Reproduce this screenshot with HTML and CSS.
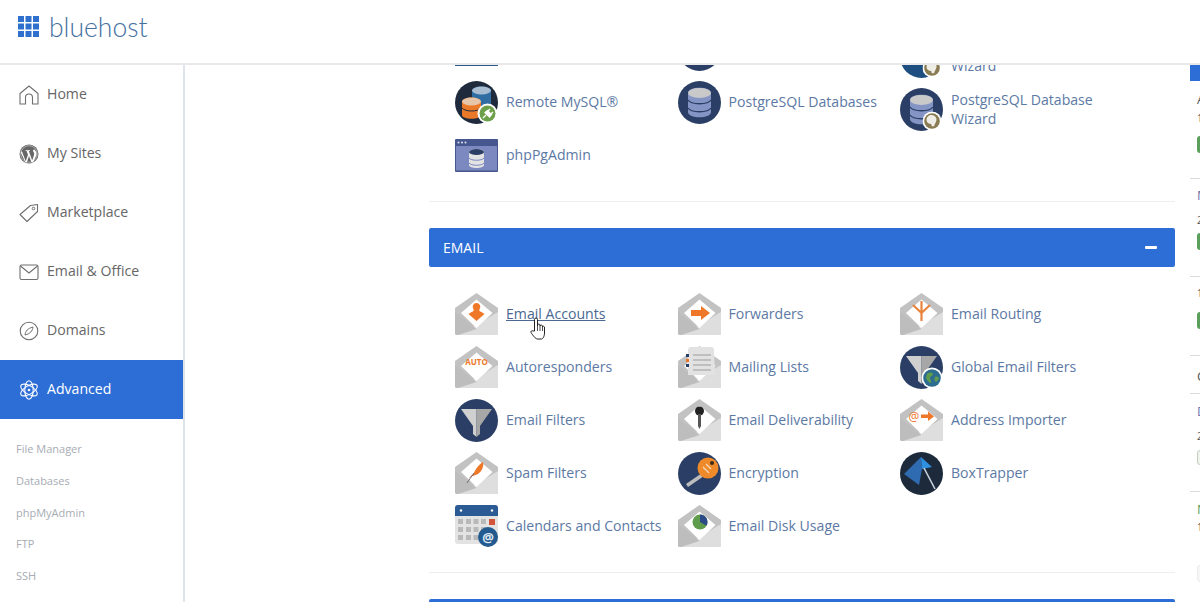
FILE: index.html
```html
<!DOCTYPE html>
<html lang="en">
<head>
<meta charset="utf-8">
<title>Bluehost - Advanced</title>
<link rel="stylesheet" href="styles.css">
</head>
<body>
<svg class="defs" width="0" height="0" aria-hidden="true">
  <symbol id="env" viewBox="0 0 43 43">
    <path d="M21.5 0 43 15V40a2 2 0 0 1-2 2H2a2 2 0 0 1-2-2V15Z" fill="#c2c2c2"/>
    <path d="M43 19V40a2 2 0 0 1-2 2H3L21.5 32Z" fill="#dedede"/>
    <path d="M0 19 21.5 36 3 42H2a2 2 0 0 1-2-2Z" fill="#bdbdbd"/>
    <path d="M21.5 6.500 37.500 20 21.500 35 6 20Z" fill="#fff"/>
  </symbol>
  <symbol id="pgdb" viewBox="0 0 43 43">
    <circle cx="21.500" cy="21.500" r="21.500" fill="#2b3f66"/>
    <path d="M10 12c0-7 23-7 23 0V31c0 7-23 7-23 0Z" fill="#8494c4"/>
    <ellipse cx="21.500" cy="12" rx="11.500" ry="5" fill="#c9c9c9"/>
    <path d="M10 19c3 5 20 5 23 0M10 27c3 5 20 5 23 0" fill="none" stroke="#2b3f66" stroke-width="1.300"/>
  </symbol>
  <symbol id="eleph" viewBox="0 0 18 18">
    <circle cx="9" cy="9" r="9" fill="#fff"/>
    <circle cx="9" cy="9" r="7.400" fill="#8a7c52"/>
    <path d="M3.800 8c0-3.500 3.200-5 5.700-4.500 3.500.5 4.500 3.800 3.300 6.300-.6 1.200-1.300 2.400-1.800 4.200H8.700L8.300 11.800C6 11.700 3.800 10.300 3.800 8Z" fill="#efeee6"/>
  </symbol>
  <symbol id="funnel" viewBox="0 0 43 43">
    <circle cx="21.500" cy="21.500" r="21.500" fill="#2b3f66"/>
    <path d="M6 10H21.500V38L18 35V27Z" fill="#d0d0d0"/>
    <path d="M37 10H21.500V38L25 35V27Z" fill="#a7a7a7"/>
  </symbol>
</svg>

<header class="topbar">
  <svg class="logo-grid" viewBox="0 0 21 21" width="21" height="21" aria-hidden="true">
    <g fill="#2f6fce">
      <rect width="6" height="6"/><rect x="7.500" width="6" height="6"/><rect x="15" width="6" height="6"/>
      <rect y="7.500" width="6" height="6"/><rect x="7.500" y="7.500" width="6" height="6"/><rect x="15" y="7.500" width="6" height="6"/>
      <rect y="15" width="6" height="6"/><rect x="7.500" y="15" width="6" height="6"/><rect x="15" y="15" width="6" height="6"/>
    </g>
  </svg>
  <span class="logo-text">bluehost</span>
</header>

<div class="body">
  <nav class="sidebar">
    <a class="nav-item">
      <svg class="nav-icon" viewBox="0 0 20 20"><path d="M1 19V8.500L10 1l9 7.500V19h-5.500V12.500a3.500 3.500 0 0 0-7 0V19Z" fill="none" stroke="#6f6f6f" stroke-width="1.100" stroke-linejoin="round"/></svg>
      <span>Home</span>
    </a>
    <a class="nav-item">
      <svg class="nav-icon" viewBox="0 0 20 20"><circle cx="10" cy="10" r="9.500" fill="#666"/><circle cx="10" cy="10" r="8.300" fill="none" stroke="#ddd" stroke-width=".6"/><path d="M2.800 7 6.700 17.300 9 10.700 7.600 7H6.500V6.200H11V7H9.800L13.200 16.500 15 11c.6-2-.5-3-1-4 0-1 .6-1.500 1.300-1.500L17.300 8 17.500 11 14 18.500H12.600L10 12 7.800 18.500H6.500L1.800 8.500Z" fill="#fff"/></svg>
      <span>My Sites</span>
    </a>
    <a class="nav-item">
      <svg class="nav-icon" viewBox="0 0 20 20"><path d="M1 11.500 11.500 2.500 18.500 1.500 18.500 8.500 8 18.500Z" fill="none" stroke="#6f6f6f" stroke-width="1.100" stroke-linejoin="round"/><circle cx="14.500" cy="5.500" r="1.300" fill="none" stroke="#6f6f6f"/></svg>
      <span>Marketplace</span>
    </a>
    <a class="nav-item">
      <svg class="nav-icon" viewBox="0 0 20 20"><rect x="1" y="3" width="18" height="14.500" rx="1.500" fill="none" stroke="#6f6f6f" stroke-width="1.100"/><path d="M1.500 4 10 11l8.500-7" fill="none" stroke="#6f6f6f" stroke-width="1.100"/></svg>
      <span>Email &amp; Office</span>
    </a>
    <a class="nav-item">
      <svg class="nav-icon" viewBox="0 0 20 20"><circle cx="10" cy="10" r="8.800" fill="none" stroke="#6f6f6f" stroke-width="1.100"/><path d="M14 6c-.5 4-2.500 6.500-8 8 .5-4 2.500-6.500 8-8Z" fill="none" stroke="#6f6f6f" stroke-width="1"/></svg>
      <span>Domains</span>
    </a>
    <a class="nav-item is-active">
      <svg class="nav-icon" viewBox="0 0 20 20"><g fill="none" stroke="#fff" stroke-width="1.100"><ellipse cx="10" cy="10" rx="4.200" ry="9.300"/><ellipse cx="10" cy="10" rx="4.200" ry="9.300" transform="rotate(60 10 10)"/><ellipse cx="10" cy="10" rx="4.200" ry="9.300" transform="rotate(120 10 10)"/></g><circle cx="10" cy="10" r="1.300" fill="#fff"/></svg>
      <span>Advanced</span>
    </a>
    <ul class="sub-nav">
      <li>File Manager</li>
      <li>Databases</li>
      <li>phpMyAdmin</li>
      <li>FTP</li>
      <li>SSH</li>
    </ul>
  </nav>

  <main class="main">
    <div class="scroller">
      <section class="group">
        <div class="tools">
          <a class="tool">
            <svg class="ico ico-win" viewBox="0 0 43 33"><rect width="43" height="33" fill="#2a5a8f"/><rect x="1" y="7" width="41" height="24.500" fill="#7c88c0"/></svg>
            <span>phpMyAdmin</span>
          </a>
          <a class="tool">
            <svg class="ico" viewBox="0 0 43 43"><use href="#pgdb"/></svg>
            <span>MySQL Databases</span>
          </a>
          <a class="tool tool-low">
            <svg class="ico" viewBox="0 0 43 43"><circle cx="21.500" cy="21.500" r="21.500" fill="#1e4f80"/><use href="#eleph" x="22.500" y="23.500" width="19" height="19"/></svg>
            <span>MySQL Database<br>Wizard</span>
          </a>
          <a class="tool">
            <svg class="ico" viewBox="0 0 43 43">
              <circle cx="21.500" cy="21.500" r="21.500" fill="#1f2a3d"/>
              <path d="M17 10c0-6 19-6 19 0V24c0 5-19 5-19 0Z" fill="#2f6da3"/>
              <ellipse cx="26.500" cy="9.500" rx="9.500" ry="4" fill="#a9bdd2"/>
              <path d="M7 21c0-6 19-6 19 0V34c0 5-19 5-19 0Z" fill="#ea7a2a"/>
              <ellipse cx="16.500" cy="20.500" rx="9.500" ry="4" fill="#e6c5a8"/>
              <path d="M7 27c3 4 16 4 19 0" fill="none" stroke="#1f2a3d"/>
              <circle cx="32.500" cy="32.500" r="10" fill="#fff"/>
              <circle cx="32.500" cy="32.500" r="8" fill="#6da04b"/>
              <path d="M28 37l3-3M30 31.500l4.500 4.500 2-2.500-4-4ZM33 30l2-2M36 33l2-2" stroke="#fff" stroke-width="1.300" fill="#fff"/>
            </svg>
            <span>Remote MySQL®</span>
          </a>
          <a class="tool">
            <svg class="ico" viewBox="0 0 43 43"><use href="#pgdb"/></svg>
            <span>PostgreSQL Databases</span>
          </a>
          <a class="tool tool-low">
            <svg class="ico" viewBox="0 0 43 43"><use href="#pgdb"/><use href="#eleph" x="22.500" y="23.500" width="19" height="19"/></svg>
            <span>PostgreSQL Database<br>Wizard</span>
          </a>
          <a class="tool">
            <svg class="ico ico-win" viewBox="0 0 43 33">
              <rect width="43" height="33" rx="1" fill="#46568f"/><rect x="1" y="7" width="41" height="24.500" fill="#7c88c0"/>
              <g fill="#dfe3f0"><circle cx="3.500" cy="3.500" r="1"/><circle cx="7" cy="3.500" r="1"/><circle cx="10.500" cy="3.500" r="1"/></g>
              <path d="M14 13c0-4 15-4 15 0V26c0 4-15 4-15 0Z" fill="#e3e3e3"/>
              <ellipse cx="21.500" cy="13" rx="7.500" ry="3" fill="#2b3f66"/>
              <path d="M14 19c2 3 13 3 15 0M14 24c2 3 13 3 15 0" fill="none" stroke="#7c88c0"/>
            </svg>
            <span>phpPgAdmin</span>
          </a>
        </div>
      </section>

      <section class="group">
        <h2 class="panel-head">EMAIL <span class="minus"></span></h2>
        <div class="tools tools-email">
          <a class="tool is-hover">
            <svg class="ico" viewBox="0 0 43 43"><use href="#env"/><path d="M21.500 10a4 4 0 0 1 3 6.500c-.7 1 0 2 2 2.500l3 2-8 7-8-7 3-2c2-.5 2.700-1.500 2-2.500a4 4 0 0 1 3-6.500Z" fill="#ee7728"/></svg>
            <span>Email Accounts</span>
            <svg class="cursor" viewBox="0 0 16 23" width="16" height="23" aria-hidden="true"><path d="M4.500 14V2.500a1.500 1.500 0 0 1 3 0V9.500V8a1.300 1.300 0 0 1 2.500 0v1.500-.5a1.300 1.300 0 0 1 2.500 0v1a1.200 1.200 0 0 1 2 0V16c0 3-1.500 6-3 6H7.500C5.500 22 3 18.500 1 15.500c-.5-1 .8-2.500 2-1.500Z" fill="#fff" stroke="#222" stroke-width="1" stroke-linejoin="round"/><path d="M7.500 10v4M10 10v4M12.500 10v4" stroke="#222" stroke-width=".8"/></svg>
          </a>
          <a class="tool">
            <svg class="ico" viewBox="0 0 43 43"><use href="#env"/><path d="M13 17H23V13L32 20 23 27V23H13Z" fill="#ee7728"/></svg>
            <span>Forwarders</span>
          </a>
          <a class="tool">
            <svg class="ico" viewBox="0 0 43 43"><use href="#env"/><path d="M21.500 28V8M21.500 20 13 12M21.500 20 30 12" fill="none" stroke="#e8843c" stroke-width="2.200"/></svg>
            <span>Email Routing</span>
          </a>
          <a class="tool">
            <svg class="ico" viewBox="0 0 43 43"><use href="#env"/><text class="auto" x="21.500" y="19" text-anchor="middle">AUTO</text></svg>
            <span>Autoresponders</span>
          </a>
          <a class="tool">
            <svg class="ico" viewBox="0 0 43 43"><use href="#env"/><path d="M10 3a3 3 0 0 1 3-2h20a3 3 0 0 1 3 2l1 26H10Z" fill="#e2e2e2"/><path d="M15 9H33M15 14H33M15 19H33M15 24H33" stroke="#b4b4b4" stroke-width="1.300"/><rect x="8" y="8" width="3" height="3" fill="#2b3f66"/><rect x="8" y="13" width="3" height="3" fill="#ee7728"/><rect x="8" y="18" width="3" height="3" fill="#2b3f66"/></svg>
            <span>Mailing Lists</span>
          </a>
          <a class="tool">
            <svg class="ico" viewBox="0 0 43 43"><use href="#funnel"/><circle cx="32" cy="32" r="10.500" fill="#fff"/><circle cx="32" cy="32" r="8.800" fill="#2d6d8f"/><path d="M27 28c2-2 5-2 6 0 0 2-3 2-3 4s2 3 1 5c-2 0-4-3-5-5ZM35 31c2-1 4 0 4 2l-3 3c-2-1-2-3-1-5Z" fill="#5f9c4c"/></svg>
            <span>Global Email Filters</span>
          </a>
          <a class="tool">
            <svg class="ico" viewBox="0 0 43 43"><use href="#funnel"/></svg>
            <span>Email Filters</span>
          </a>
          <a class="tool">
            <svg class="ico" viewBox="0 0 43 43"><use href="#env"/><circle cx="21.500" cy="12" r="4.500" fill="#222"/><path d="M20 15h3v12l-1.500 3-1.500-3Z" fill="#555"/></svg>
            <span>Email Deliverability</span>
          </a>
          <a class="tool">
            <svg class="ico" viewBox="0 0 43 43"><use href="#env"/><text class="at" x="14" y="22" text-anchor="middle">@</text><path d="M21 15.500H28V12.500L34 17.500 28 22V19H21Z" fill="#ee7728"/></svg>
            <span>Address Importer</span>
          </a>
          <a class="tool">
            <svg class="ico" viewBox="0 0 43 43"><use href="#env"/><path d="M27 12C25 16 20 21 16 24L13 27C15 25 22 22 28 14Z" fill="#d94b24"/><path d="M28 10c1 4-1 9-5 12l-5 2c1-5 5-11 10-14Z" fill="#ee7728"/><path d="M12 31 19 21" stroke="#555" stroke-width=".8"/></svg>
            <span>Spam Filters</span>
          </a>
          <a class="tool">
            <svg class="ico" viewBox="0 0 43 43"><circle cx="21.500" cy="21.500" r="21.500" fill="#2b3f66"/><path d="M8 32 24 21l2 3L10 35Z" fill="#bdbdbd"/><circle cx="30" cy="16" r="10.500" fill="#ee8a2a"/><circle cx="34" cy="11" r="2" fill="#3a2a1a"/><path d="M25 15l6 6M28 12l5 5" stroke="#f6d9b8" stroke-width="1.300"/></svg>
            <span>Encryption</span>
          </a>
          <a class="tool">
            <svg class="ico" viewBox="0 0 43 43"><circle cx="21.500" cy="21.500" r="21.500" fill="#1c2a3c"/><path d="M4 22 21 5 22 17 19 33Z" fill="#2e6bb0"/><path d="M21 5 32 15 22 17Z" fill="#2f8fe0"/><path d="M24 16 35 37" stroke="#c9d3dd" stroke-width="1.600"/></svg>
            <span>BoxTrapper</span>
          </a>
          <a class="tool tool-cal">
            <svg class="ico" viewBox="0 0 43 43">
              <rect y="0" width="43" height="39" rx="3" fill="#e3e3e3"/>
              <path d="M0 11V3a3 3 0 0 1 3-3H40a3 3 0 0 1 3 3v8Z" fill="#2b5a94"/>
              <circle cx="6" cy="5.500" r="1.200" fill="#fff"/><circle cx="37" cy="5.500" r="1.200" fill="#fff"/>
              <g fill="#b9b9b9">
                <rect x="3" y="14" width="5" height="5"/><rect x="11" y="14" width="5" height="5"/><rect x="18.500" y="14" width="5" height="5"/><rect x="26" y="14" width="5" height="5"/>
                <rect x="3" y="22" width="5" height="5"/><rect x="11" y="22" width="5" height="5"/><rect x="18.500" y="22" width="5" height="5"/><rect x="26" y="22" width="5" height="5"/>
                <rect x="3" y="30" width="5" height="5"/><rect x="11" y="30" width="5" height="5"/><rect x="18.500" y="30" width="5" height="5"/>
              </g>
              <rect x="34" y="14" width="6" height="6" fill="#d2543a"/>
              <circle cx="33" cy="32" r="10" fill="#235a8f"/>
              <text class="at at-white" x="33" y="36.500" text-anchor="middle">@</text>
            </svg>
            <span>Calendars and Contacts</span>
          </a>
          <a class="tool">
            <svg class="ico" viewBox="0 0 43 43"><use href="#env"/><circle cx="22" cy="17" r="7.500" fill="#5f9c4c"/><path d="M22 9.500a7.500 7.500 0 0 1 6.500 11.200L22 17Z" fill="#2b4a86"/></svg>
            <span>Email Disk Usage</span>
          </a>
        </div>
      </section>

      <div class="panel-next"></div>
    </div>
  </main>

  <aside class="rail">
    <div class="rail-top"></div>
    <div class="card card-a"><p class="r-title">A</p><p class="r-small">1</p><p class="r-btn"></p></div>
    <div class="card card-b"><p class="r-title r-purple">M</p><p class="r-small">2</p><p class="r-btn"></p></div>
    <div class="card card-c"><p class="r-small">1</p><p class="r-btn"></p></div>
    <div class="card card-d"><p class="r-title">C</p></div>
    <div class="card card-e"><p class="r-title r-purple">D</p><p class="r-small">2</p><p class="r-btn r-pale"></p></div>
    <div class="card card-f"><p class="r-title r-green">N</p><p class="r-small">1</p><p class="r-btn r-ghost"></p></div>
  </aside>
</div>
</body>
</html>
```

FILE: styles.css
```css
* { box-sizing: border-box; }
html, body { margin: 0; height: 100%; }
p { margin: 0; }
body {
  display: flex;
  flex-direction: column;
  height: 602px;
  overflow: hidden;
  background: #fff;
  font-family: "Open Sans", "Liberation Sans", sans-serif;
}
.defs { position: absolute; }

.topbar {
  flex: 0 0 65px;
  display: flex;
  align-items: center;
  padding: 0 0 10px 18px;
  border-bottom: 2px solid #e8e8e8;
}
.logo-grid { flex: none; margin-right: 10px; }
.logo-text {
  margin-top: 2px;
  font-family: Lato, "Open Sans", sans-serif;
  font-weight: 300;
  font-size: 26.5px;
  line-height: 1;
  color: #44719f;
}

.body { flex: 1; display: flex; min-height: 0; }

.sidebar {
  flex: 0 0 185px;
  border-right: 2px solid #dfe3ea;
}
.nav-item {
  display: flex;
  align-items: center;
  height: 59px;
  padding-left: 19px;
  font-size: 14.1px;
  color: #666;
}
.nav-item span { padding-bottom: 2px; }
.nav-icon { width: 20px; height: 20px; flex: none; margin-right: 8px; }
.is-active { background: #2d6ed6; color: #fff; }
.sub-nav {
  list-style: none;
  margin: 0;
  padding: 14px 0 0 16px;
  font-size: 11px;
  color: #a7acb4;
}
.sub-nav li { height: 31.75px; line-height: 31.75px; }

.main { flex: 1; min-width: 0; overflow: hidden; padding: 0 15px 0 244px; }
.scroller { margin-top: -42.5px; }

.group { border-bottom: 1px solid #eee; margin-bottom: 26px; padding-bottom: 19.5px; }

.tools {
  display: grid;
  grid-template-columns: repeat(3, 222.5px);
  grid-auto-rows: 53px;
  padding-left: 26px;
}
.tools-email { padding-top: 20.5px; }
.tool {
  position: relative;
  display: flex;
  align-items: center;
  font-size: 14.1px;
  line-height: 19px;
  color: #5c79a4;
  white-space: nowrap;
}
.tool span { padding-bottom: 2px; }
.tool-low { margin-top: 14px; }
.tool-low span { padding-bottom: 0; }
.ico { flex: none; width: 43px; height: 43px; margin-right: 8px; }
.ico-win { height: 33px; }
.is-hover span { color: #4a6892; text-decoration: underline; }
.cursor { position: absolute; left: 75px; top: 29px; }

.auto { font: 700 8px "Open Sans", sans-serif; fill: #ee7728; }
.at { font: 400 12px "Open Sans", sans-serif; fill: #ee7728; }
.at-white { font-size: 13px; font-weight: 700; fill: #dfe9f3; }

.panel-head {
  position: relative;
  display: flex;
  align-items: center;
  height: 39px;
  margin: 0;
  padding-left: 14px;
  border-radius: 2px;
  background: #2d6ed6;
  color: #fff;
  font-size: 14px;
  font-weight: 400;
}
.minus {
  position: absolute;
  right: 18px;
  top: 18px;
  width: 12px;
  height: 2.500px;
  border-radius: 1px;
  background: #fff;
}
.panel-next { height: 40px; background: #2d6ed6; border-radius: 2px 2px 0 0; }

.rail { flex: 0 0 10px; overflow: hidden; }
.rail-top { height: 16px; background: #2d6ed6; }
.card {
  display: flex;
  flex-direction: column;
  padding-left: 7px;
  border-bottom: 1px solid #dcdcdc;
  font-size: 13px;
  line-height: 18px;
  color: #555;
}
.r-title { height: 18px; }
.r-small { font-size: 10px; height: 14px; line-height: 14px; }
.r-btn { flex: none; width: 20px; height: 17px; border-radius: 3px; background: #5aa05c; }
.r-purple { color: #6f72ad; }
.r-green { color: #5aa05c; }
.r-pale { height: 15px; background: #f0f4ee; border: 1px solid #c3cdc0; }
.r-ghost { background: #f6f6f6; border: 1px solid #ececec; }

.card-a { height: 98px; padding-top: 9px; }
.card-a .r-small { margin-top: 3px; }
.card-a .r-btn { margin-top: 11px; }
.card-b { height: 98px; padding-top: 7px; }
.card-b .r-small { margin-top: 9px; }
.card-b .r-btn { margin-top: 6px; }
.card-c { height: 79px; padding-top: 9px; }
.card-c .r-btn { margin-top: 12px; }
.card-d { height: 38px; padding-top: 11px; }
.card-e { height: 98px; padding-top: 7.5px; }
.card-e .r-small { margin-top: 9px; }
.card-e .r-btn { margin-top: 7.5px; }
.card-f { border-bottom: 0; height: 110px; padding-top: 7.5px; }
.card-f .r-small { margin-top: 2.5px; }
.card-f .r-btn { margin-top: 31px; }
```
